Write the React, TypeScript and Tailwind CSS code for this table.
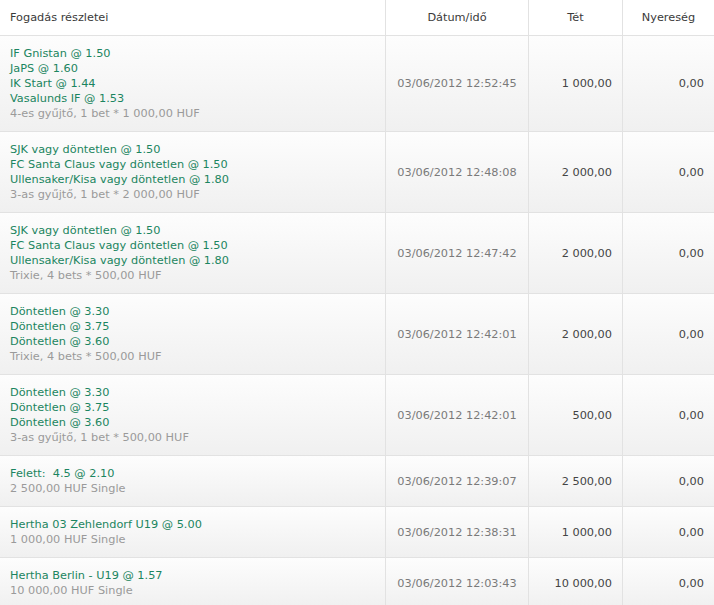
type Bet = {
  picks: string[];
  summary: string;
  date: string;
  stake: string;
  win: string;
};

const bets: Bet[] = [
  {
    picks: ["IF Gnistan @ 1.50", "JaPS @ 1.60", "IK Start @ 1.44", "Vasalunds IF @ 1.53"],
    summary: "4-es gyűjtő, 1 bet * 1 000,00 HUF",
    date: "03/06/2012 12:52:45",
    stake: "1 000,00",
    win: "0,00",
  },
  {
    picks: ["SJK vagy döntetlen @ 1.50", "FC Santa Claus vagy döntetlen @ 1.50", "Ullensaker/Kisa vagy döntetlen @ 1.80"],
    summary: "3-as gyűjtő, 1 bet * 2 000,00 HUF",
    date: "03/06/2012 12:48:08",
    stake: "2 000,00",
    win: "0,00",
  },
  {
    picks: ["SJK vagy döntetlen @ 1.50", "FC Santa Claus vagy döntetlen @ 1.50", "Ullensaker/Kisa vagy döntetlen @ 1.80"],
    summary: "Trixie, 4 bets * 500,00 HUF",
    date: "03/06/2012 12:47:42",
    stake: "2 000,00",
    win: "0,00",
  },
  {
    picks: ["Döntetlen @ 3.30", "Döntetlen @ 3.75", "Döntetlen @ 3.60"],
    summary: "Trixie, 4 bets * 500,00 HUF",
    date: "03/06/2012 12:42:01",
    stake: "2 000,00",
    win: "0,00",
  },
  {
    picks: ["Döntetlen @ 3.30", "Döntetlen @ 3.75", "Döntetlen @ 3.60"],
    summary: "3-as gyűjtő, 1 bet * 500,00 HUF",
    date: "03/06/2012 12:42:01",
    stake: "500,00",
    win: "0,00",
  },
  {
    picks: ["Felett:\u00a0 4.5 @ 2.10"],
    summary: "2 500,00 HUF Single",
    date: "03/06/2012 12:39:07",
    stake: "2 500,00",
    win: "0,00",
  },
  {
    picks: ["Hertha 03 Zehlendorf U19 @ 5.00"],
    summary: "1 000,00 HUF Single",
    date: "03/06/2012 12:38:31",
    stake: "1 000,00",
    win: "0,00",
  },
  {
    picks: ["Hertha Berlin - U19 @ 1.57"],
    summary: "10 000,00 HUF Single",
    date: "03/06/2012 12:03:43",
    stake: "10 000,00",
    win: "0,00",
  },
];

export default function App() {
  return (
    <div className="w-[714px] h-[605px] overflow-hidden bg-white font-['DejaVu_Sans',Verdana,sans-serif] text-[11.3px] leading-[15px]">
      <div className="flex h-[36px] border-b border-[#e2e2e2] bg-white text-[#3a3a3a]">
        <div className="flex w-[385px] items-center pl-[10px] pb-[1px]">Fogadás részletei</div>
        <div className="flex w-[143px] items-center justify-center border-l border-[#e2e2e2] pb-[1px]">Dátum/idő</div>
        <div className="flex w-[94px] items-center justify-center border-l border-[#e2e2e2] pb-[1px]">Tét</div>
        <div className="flex w-[92px] items-center justify-center border-l border-[#e2e2e2] pb-[1px]">Nyereség</div>
      </div>

      {bets.map((bet, i) => (
        <div
          key={i}
          className="flex border-b border-[#e2e2e2] bg-[linear-gradient(180deg,#fdfdfd_0%,#f0f0f0_100%)]"
        >
          <div className="w-[385px] py-[10px] pl-[10px]">
            {bet.picks.map((pick, j) => (
              <div key={j} className="whitespace-pre text-[#1b8560]">
                {pick}
              </div>
            ))}
            <div className="text-[#9a9a9a]">{bet.summary}</div>
          </div>
          <div className="flex w-[143px] items-center justify-center border-l border-[#e2e2e2] text-[11.3px] text-[#7a7a7a]">
            {bet.date}
          </div>
          <div className="flex w-[94px] items-center justify-end border-l border-[#e2e2e2] pr-[10px] text-[#444]">
            {bet.stake}
          </div>
          <div className="flex w-[92px] items-center justify-end border-l border-[#e2e2e2] pr-[10px] text-[#444]">
            {bet.win}
          </div>
        </div>
      ))}
    </div>
  );
}
